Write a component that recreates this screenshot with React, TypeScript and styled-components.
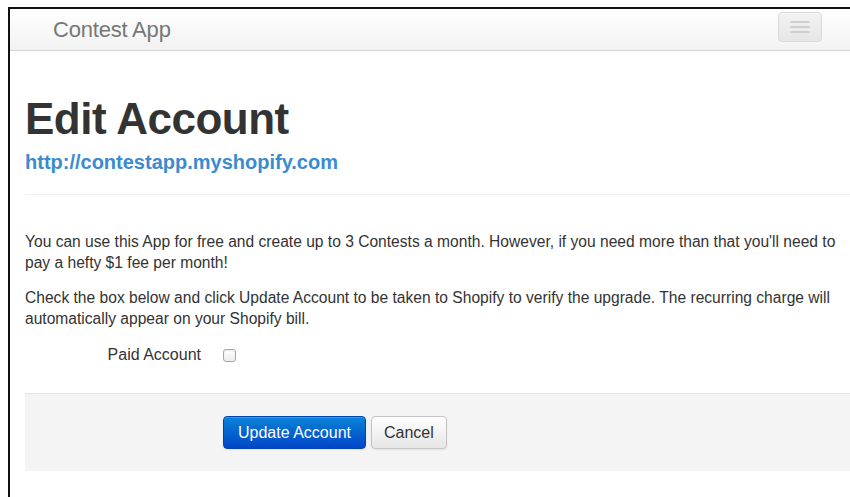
import React from 'react'
import styled, { createGlobalStyle } from 'styled-components'

const GlobalStyle = createGlobalStyle`
  html, body {
    margin: 0;
    padding: 0;
    background: #fff;
    overflow: hidden;
  }
  body {
    font-family: 'Liberation Sans', Arial, sans-serif;
    color: #333;
  }
  * {
    box-sizing: border-box;
  }
`

const Frame = styled.div`
  margin: 7px 0 0 8px;
  width: 880px;
  height: 500px;
  border-left: 2px solid #111;
  border-top: 2px solid #111;
  background: #fff;
`

const Navbar = styled.div`
  width: 840px;
  height: 42px;
  display: flex;
  align-items: center;
  justify-content: space-between;
  padding: 0 28px 0 43px;
  background: linear-gradient(to bottom, #ffffff, #f2f2f2);
  border-bottom: 1px solid #d4d4d4;
`

const Brand = styled.a`
  font-size: 22px;
  color: #777;
  text-decoration: none;
  letter-spacing: -0.2px;
`

const Toggle = styled.button`
  align-self: flex-start;
  width: 44px;
  height: 30px;
  margin-top: 3px;
  display: flex;
  flex-direction: column;
  align-items: center;
  justify-content: center;
  gap: 3px;
  background: linear-gradient(to bottom, #f2f2f2, #e6e6e6);
  border: 1px solid #d9d9d9;
  border-radius: 4px;
  box-shadow: inset 0 1px 0 rgba(255, 255, 255, 0.4);
  padding: 0;
`

const ToggleBar = styled.span`
  display: block;
  width: 20px;
  height: 2px;
  background: #cfcfcf;
  border-radius: 1px;
`

const Container = styled.div`
  padding: 0 0 0 15px;
  width: 855px;
`

const Title = styled.h1`
  margin: 40px 0 0;
  font-size: 44px;
  line-height: 56px;
  font-weight: bold;
  color: #333;
  letter-spacing: -0.5px;
`

const ShopLink = styled.a`
  display: block;
  margin-top: 3px;
  font-size: 20px;
  line-height: 24px;
  font-weight: bold;
  color: #3a8bd0;
  text-decoration: none;
`

const Divider = styled.hr`
  margin: 20px 0 0;
  border: 0;
  border-top: 1px solid #eee;
`

const Intro = styled.div`
  margin-top: 36px;
`

const Para = styled.p`
  margin: 0 0 14px;
  font-size: 15.6px;
  line-height: 21px;
  color: #333;
  width: 822px;

  &:last-child {
    margin-bottom: 0;
  }
`

const FieldRow = styled.div`
  display: grid;
  grid-template-columns: 176px 1fr;
  column-gap: 22px;
  align-items: center;
  margin-top: 13px;
  height: 26px;
`

const FieldLabel = styled.label`
  text-align: right;
  font-size: 16px;
  color: #333;
`

const Check = styled.span`
  display: block;
  width: 13px;
  height: 13px;
  border: 1px solid #a8a8a8;
  border-radius: 3px;
  background: linear-gradient(to bottom, #ffffff, #ececec);
  box-shadow: inset 0 1px 1px rgba(0, 0, 0, 0.08);
`

const Actions = styled.div`
  margin-top: 25px;
  height: 78px;
  padding-left: 198px;
  display: flex;
  align-items: center;
  gap: 5px;
  background: #f4f4f4;
  border-top: 1px solid #e3e3e3;
`

const Button = styled.button<{ primary?: boolean }>`
  height: 33px;
  padding: 0 ${(p) => (p.primary ? '14px' : '12px')};
  font-family: 'Liberation Sans', Arial, sans-serif;
  font-size: 16px;
  border-radius: 4px;
  cursor: pointer;
  color: ${(p) => (p.primary ? '#fff' : '#333')};
  background: ${(p) =>
    p.primary
      ? 'linear-gradient(to bottom, #0a83d8, #0046c8)'
      : 'linear-gradient(to bottom, #ffffff, #e6e6e6)'};
  border: 1px solid ${(p) => (p.primary ? '#0044aa' : '#c4c4c4')};
  box-shadow: inset 0 1px 0 rgba(255, 255, 255, 0.2), 0 1px 2px rgba(0, 0, 0, 0.08);
`

export default function App() {
  return (
    <>
      <GlobalStyle />
      <Frame>
        <Navbar>
          <Brand href="#">Contest App</Brand>
          <Toggle aria-label="Menu">
            <ToggleBar />
            <ToggleBar />
            <ToggleBar />
          </Toggle>
        </Navbar>
        <Container>
          <Title>Edit Account</Title>
          <ShopLink href="#">http://contestapp.myshopify.com</ShopLink>
          <Divider />
          <Intro>
            <Para>
              You can use this App for free and create up to 3 Contests a month. However, if you need more than that
              you'll need to pay a hefty $1 fee per month!
            </Para>
            <Para>
              Check the box below and click Update Account to be taken to Shopify to verify the upgrade. The recurring
              charge will automatically appear on your Shopify bill.
            </Para>
          </Intro>
          <FieldRow>
            <FieldLabel>Paid Account</FieldLabel>
            <Check />
          </FieldRow>
          <Actions>
            <Button primary>Update Account</Button>
            <Button>Cancel</Button>
          </Actions>
        </Container>
      </Frame>
    </>
  )
}
